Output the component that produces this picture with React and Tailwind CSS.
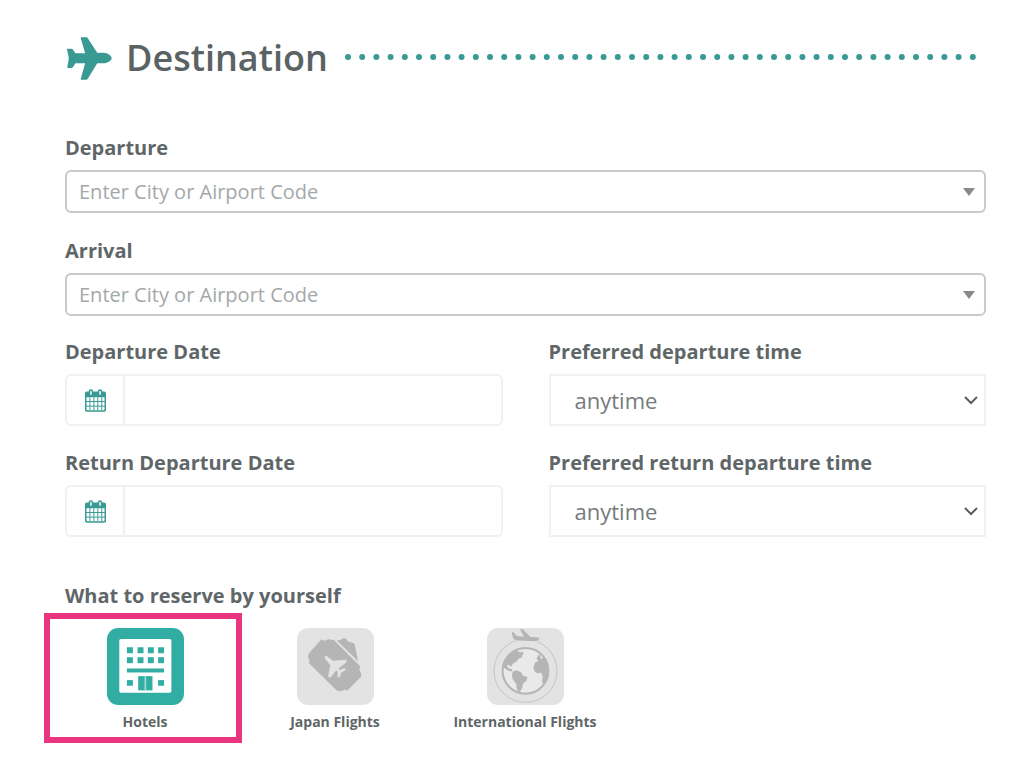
import { useState } from "react";

const AIRPORTS = ["Tokyo (HND)", "Osaka (KIX)", "Sapporo (CTS)", "Fukuoka (FUK)"];
const TIMES = ["anytime", "morning", "afternoon", "evening"];

function PlaneIcon() {
  return (
    <svg viewBox="0 0 134 128" className="h-[43px] w-[45px] shrink-0 fill-[#389a93]" aria-hidden="true">
      <path d="M1 35H13Q16 35 18 38L25 48H54L41 4Q40 1 43 1H57Q60 1 62 4L90 47H108C121 47 133 56 133 63C133 70 121 78 108 78H90L62 124Q60 127 57 127H43Q40 127 41 124L54 78H25L18 89Q16 92 13 92H2Q0 92 1 89L5 66V60L0 37Z" />
    </svg>
  );
}

function CalendarIcon() {
  return (
    <svg viewBox="0 0 64 68" className="h-[23px] w-[21px]" aria-hidden="true">
      <rect x="2" y="9" width="60" height="57" rx="5" fill="#fff" stroke="#389a93" strokeWidth="5" />
      <path d="M2 24V13Q2 8 7 8H57Q62 8 62 13V24Z" fill="#389a93" />
      <path d="M15 24V64M27 24V64M39 24V64M51 24V64M3 37H61M3 51H61" stroke="#389a93" strokeWidth="3" />
      <rect x="13" y="2" width="10" height="17" rx="5" fill="#cfe6e4" stroke="#389a93" strokeWidth="4" />
      <rect x="41" y="2" width="10" height="17" rx="5" fill="#cfe6e4" stroke="#389a93" strokeWidth="4" />
    </svg>
  );
}

function HotelIcon() {
  return (
    <svg viewBox="0 0 232 232" className="size-[77px]" aria-hidden="true">
      <rect width="232" height="232" rx="34" fill="#31ada3" />
      <rect x="37" y="33" width="157" height="162" rx="5" fill="#fff" />
      <g fill="#31ada3">
        {[60, 92, 123, 154].map((x) => (
          <g key={x}>
            <rect x={x} y="58" width="18" height="18" />
            <rect x={x} y="88" width="18" height="18" />
          </g>
        ))}
        <rect x="60" y="122" width="112" height="12" />
        <rect x="60" y="157" width="18" height="17" />
        <rect x="154" y="157" width="18" height="17" />
        <rect x="94" y="145" width="43" height="43" />
      </g>
      <path d="M115.500 145V188" stroke="#a9dcd8" strokeWidth="5" />
    </svg>
  );
}

function TicketIcon() {
  return (
    <svg viewBox="0 0 232 232" className="size-[77px]" aria-hidden="true">
      <rect width="232" height="232" rx="34" fill="#e3e3e3" />
      <path
        d="M74 34Q81 41 89 36Q97 31 105 37L110 35L191 116Q186 123 190 130Q195 137 193 147L152 188Q144 184 137 188Q128 194 118 187L35 105Q40 98 35 91Q31 84 36 76Z"
        fill="#b5b5b5"
      />
      <path d="M119 36Q128 39 136 33Q142 29 149 34Q151 42 160 43Q170 43 174 49L184 100Z" fill="#b5b5b5" />
      <path
        d="M84 84Q89 83 94 88L108 99L146 96Q153 98 148 104L124 123L129 126L142 121Q149 123 145 128L133 134L129 148Q124 151 122 145L123 132L118 128L102 148Q97 151 94 145L100 112L85 93Q82 88 84 84Z"
        fill="#e3e3e3"
      />
    </svg>
  );
}

function GlobeIcon() {
  return (
    <svg viewBox="0 0 232 232" className="size-[77px]" aria-hidden="true">
      <rect width="232" height="232" rx="34" fill="#e3e3e3" />
      <circle cx="116" cy="129" r="95" fill="none" stroke="#c4c4c4" strokeWidth="3" />
      <path
        d="M74 12L80 13L90 24L112 26L99 4H108L131 27L148 28Q159 29 158 34Q157 39 147 40L95 38Q82 37 78 29Z"
        fill="#b5b5b5"
        stroke="#e3e3e3"
        strokeWidth="4"
        paintOrder="stroke"
      />
      <circle cx="116" cy="129" r="69" fill="#e9e9e9" stroke="#b5b5b5" strokeWidth="6" />
      <g fill="#b5b5b5">
        <path d="M50 111Q57 85 80 71L91 67L98 73L107 72L111 78L105 83L107 88L97 91L88 102L78 108L72 117L65 111L59 114L66 122L75 124L76 131L63 128L49 118Z" />
        <path d="M78 131L90 127L103 134L108 143L122 148L119 159L109 167L106 181L98 194L90 186L88 169L77 154L75 142Z" />
        <path d="M158 78Q151 84 149 93L155 98L145 105L140 118L143 130L152 136L163 135L168 145L166 160L170 173Q187 150 185 123Q182 101 170 87L164 94Z" />
      </g>
    </svg>
  );
}

const RESERVATIONS = [
  { id: "hotels", label: "Hotels", Icon: HotelIcon },
  { id: "japan", label: "Japan Flights", Icon: TicketIcon },
  { id: "international", label: "International Flights", Icon: GlobeIcon },
];

function AirportField({ id, label }) {
  return (
    <div>
      <label htmlFor={id} className="block text-xl leading-7 font-bold">
        {label}
      </label>
      <div className="relative mt-2">
        <select
          id={id}
          defaultValue=""
          className="block h-[43px] w-full appearance-none rounded-md border-2 border-[#c8caca] bg-white pr-10 pl-3 text-xl text-[#a4a8a8]"
        >
          <option value="">Enter City or Airport Code</option>
          {AIRPORTS.map((a) => (
            <option key={a}>{a}</option>
          ))}
        </select>
        <svg viewBox="0 0 12 8" className="pointer-events-none absolute top-[18px] right-[11px] h-2 w-3 fill-[#868a8b]" aria-hidden="true">
          <path d="M0 0H12L6 8Z" />
        </svg>
      </div>
    </div>
  );
}

function DateField({ id, label }) {
  return (
    <div>
      <label htmlFor={id} className="block text-xl leading-7 font-bold">
        {label}
      </label>
      <div className="mt-2 flex h-[52px] rounded-md border-2 border-[#f0f2f2]">
        <span className="flex w-[58px] shrink-0 items-center justify-center border-r-2 border-[#f0f2f2]">
          <CalendarIcon />
        </span>
        <input id={id} type="text" className="min-w-0 flex-1 px-4 text-[22px]" />
      </div>
    </div>
  );
}

function TimeField({ id, label }) {
  return (
    <div>
      <label htmlFor={id} className="block text-xl leading-7 font-bold">
        {label}
      </label>
      <div className="relative mt-2">
        <select
          id={id}
          className="block h-[52px] w-full appearance-none border-2 border-[#f0f2f2] bg-white pr-10 pl-6 text-[22px] text-[#757b7d]"
        >
          {TIMES.map((t) => (
            <option key={t}>{t}</option>
          ))}
        </select>
        <svg
          viewBox="0 0 14 10"
          className="pointer-events-none absolute top-[21px] right-2 h-[10px] w-[14px] fill-none stroke-[#5a6062] stroke-2"
          aria-hidden="true"
        >
          <path d="M1 2L7 8L13 2" />
        </svg>
      </div>
    </div>
  );
}

export default function App() {
  const [selected, setSelected] = useState("hotels");

  return (
    <main className="bg-white pt-8 pr-[38px] pb-4 pl-[65px] font-['Open_Sans','Noto_Sans',sans-serif] text-[#5f6668]">
      <header className="flex items-center pl-0.5">
        <PlaneIcon />
        <h1 className="ml-[14px] text-4xl leading-[52px] font-semibold text-[#5a6264]">Destination</h1>
        <svg className="mr-1 ml-4 h-2 min-w-0 flex-1" aria-hidden="true">
          <line x1="4" y1="3" x2="100%" y2="3" stroke="#389a93" strokeWidth="6" strokeLinecap="round" strokeDasharray="0 14.2" />
        </svg>
      </header>

      <form className="mt-[50px]">
        <div className="flex flex-col gap-6">
          <AirportField id="departure" label="Departure" />
          <AirportField id="arrival" label="Arrival" />
        </div>

        <div className="mt-[22px] grid grid-cols-2 gap-x-[46px] gap-y-[23px]">
          <DateField id="departure-date" label="Departure Date" />
          <TimeField id="departure-time" label="Preferred departure time" />
          <DateField id="return-date" label="Return Departure Date" />
          <TimeField id="return-time" label="Preferred return departure time" />
        </div>

        <fieldset className="mt-[45px]">
          <legend className="text-xl leading-7 font-bold">What to reserve by yourself</legend>
          <div className="mt-[18px] -ml-[15px] flex">
            {RESERVATIONS.map(({ id, label, Icon }) => (
              <label key={id} className="relative flex w-[190px] cursor-pointer flex-col items-center">
                <input
                  type="radio"
                  name="reservation"
                  checked={selected === id}
                  onChange={() => setSelected(id)}
                  className="sr-only"
                />
                <Icon />
                <span className="mt-[7px] text-sm leading-5 font-bold whitespace-nowrap">{label}</span>
                {selected === id && (
                  <span className="pointer-events-none absolute -top-[15px] -right-[2px] -bottom-[11px] -left-[6px] border-[6px] border-[#ea3680]" />
                )}
              </label>
            ))}
          </div>
        </fieldset>
      </form>
    </main>
  );
}
